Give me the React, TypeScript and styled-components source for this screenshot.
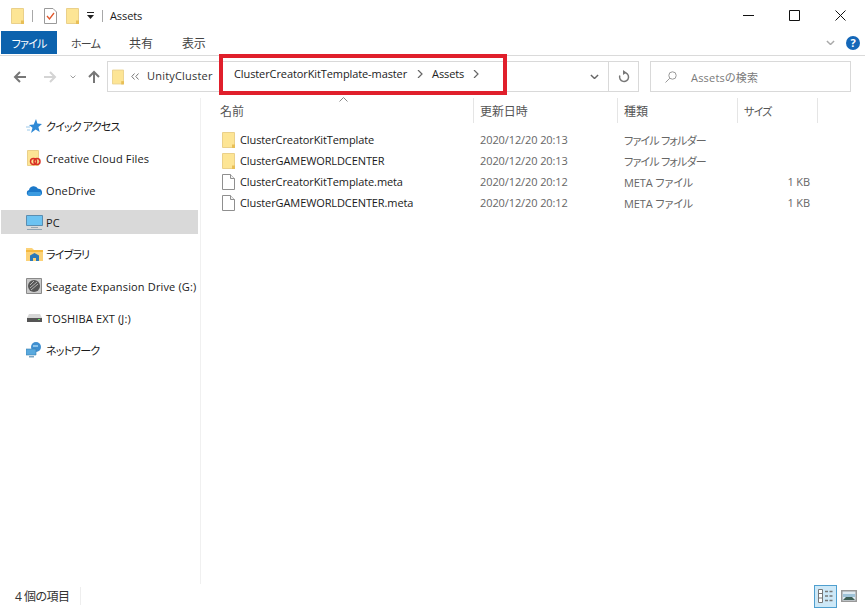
import styled, { createGlobalStyle } from "styled-components";
import { ReactNode } from "react";

const GlobalStyle = createGlobalStyle`
  html, body {
    margin: 0;
    background: #fff;
  }
  * {
    box-sizing: border-box;
  }
`;

const Window = styled.div`
  position: relative;
  width: 865px;
  height: 610px;
  overflow: hidden;
  display: flex;
  flex-direction: column;
  background: #fff;
  color: #1a1a1a;
  font-family: "Open Sans", "Noto Sans CJK JP", sans-serif;
  font-size: 11px;
  letter-spacing: -0.1px;
  font-feature-settings: "palt";
`;

const Kana = styled.span`
  font-size: 11px;
  letter-spacing: -0.8px;
`;

const TitleBar = styled.div`
  height: 31px;
  flex: none;
  display: flex;
  align-items: center;
  padding-left: 11px;
`;

const QuickBar = styled.div`
  display: flex;
  align-items: center;
`;

const TitleSep = styled.span<{ $left: number; $right: number }>`
  width: 1px;
  height: 12px;
  background: #a8a8a8;
  margin: 0 ${(p) => p.$right}px 0 ${(p) => p.$left}px;
`;

const TitleText = styled.span`
  font-size: 11px;
`;

const WindowButtons = styled.div`
  margin-left: auto;
  display: flex;
  align-items: center;
  gap: 35px;
  padding-right: 19px;
`;

const RibbonTabs = styled.div`
  height: 25px;
  flex: none;
  display: flex;
  align-items: stretch;
  border-bottom: 1px solid #dadada;
  padding-left: 1px;
  font-size: 12px;
`;

const FileTab = styled.div`
  width: 56px;
  height: 23px;
  background: #0c62ad;
  color: #fff;
  display: flex;
  align-items: center;
  justify-content: center;
`;

const RibbonTab = styled.div<{ $left: number }>`
  margin-left: ${(p) => p.$left}px;
  height: 23px;
  display: flex;
  align-items: center;
  color: #444;
`;

const RibbonTools = styled.div`
  margin-left: auto;
  height: 23px;
  display: flex;
  align-items: center;
  gap: 11px;
  padding-right: 5px;
`;

const HelpBadge = styled.div`
  width: 14px;
  height: 14px;
  border-radius: 50%;
  background: #1467b8;
  color: #fff;
  font-size: 11px;
  font-weight: 700;
  line-height: 14px;
  text-align: center;
`;

const NavRow = styled.div`
  height: 42px;
  flex: none;
  display: flex;
  align-items: flex-start;
  padding: 5px 14px 0 13px;
`;

const NavButtons = styled.div`
  width: 94px;
  height: 31px;
  flex: none;
  display: flex;
  align-items: center;
`;

const NavSlot = styled.div<{ $left: number }>`
  margin-left: ${(p) => p.$left}px;
  display: flex;
  justify-content: center;
`;

const AddressBar = styled.div`
  width: 532px;
  height: 31px;
  flex: none;
  border: 1px solid #d9d9d9;
  display: flex;
  align-items: center;
  padding-left: 4px;
`;

const OverflowMark = styled.svg`
  margin-left: 7px;
`;

const Crumb = styled.span`
  margin-left: 8px;
  color: #333;
  white-space: nowrap;
  padding-bottom: 2px;
  letter-spacing: 0.2px;
`;

const AddressTail = styled.div`
  margin-left: auto;
  display: flex;
  align-items: stretch;
  height: 100%;
`;

const AddressDrop = styled.div`
  width: 29px;
  display: flex;
  align-items: center;
  justify-content: center;
  padding-left: 2px;
`;

const RefreshButton = styled.div`
  width: 30px;
  border-left: 1px solid #d9d9d9;
  display: flex;
  align-items: center;
  justify-content: center;
`;

const SearchBox = styled.div`
  width: 201px;
  height: 31px;
  flex: none;
  margin-left: 11px;
  border: 1px solid #d9d9d9;
  display: flex;
  align-items: center;
  gap: 14px;
  padding-left: 14px;
  color: #7a7a7a;
  letter-spacing: 0.2px;
`;

const Body = styled.div`
  flex: 1;
  display: flex;
  min-height: 0;
`;

const Sidebar = styled.nav`
  width: 201px;
  flex: none;
  border-right: 1px solid #f0f0f0;
  padding: 16px 0 0 1px;
`;

const SideItem = styled.div<{ $selected?: boolean }>`
  width: 197px;
  height: 24px;
  margin-bottom: 8px;
  display: flex;
  align-items: center;
  padding-left: 24px;
  white-space: nowrap;
  letter-spacing: 0.15px;
  background: ${(p) => (p.$selected ? "#d9d9d9" : "transparent")};
`;

const SideIcon = styled.div`
  width: 18px;
  height: 18px;
  margin-right: 3px;
  flex: none;
  display: flex;
  align-items: center;
  justify-content: center;
`;

const Main = styled.main`
  flex: 1;
  min-width: 0;
`;

const ColumnHeader = styled.div`
  height: 25px;
  display: grid;
  grid-template-columns: 273px 144px 120px 80px;
  color: #555;
  font-size: 12px;
`;

const HeaderCell = styled.div`
  position: relative;
  border-right: 1px solid #e5e5e5;
  padding-left: 6px;
  display: flex;
  align-items: center;
`;

const NameHeader = styled(HeaderCell)`
  padding-left: 19px;
`;

const SortMark = styled.svg`
  position: absolute;
  left: 138px;
  top: -1px;
`;

const FileList = styled.div`
  padding-top: 6px;
`;

const FileRow = styled.div`
  height: 21px;
  display: grid;
  grid-template-columns: 272px 144px 120px 73px;
  align-items: center;
`;

const NameCell = styled.div`
  display: flex;
  align-items: center;
  padding-left: 21px;
  white-space: nowrap;
`;

const FileIconSlot = styled.div`
  width: 13px;
  height: 16px;
  margin-right: 5px;
  display: flex;
  align-items: center;
`;

const MetaCell = styled.div<{ $right?: boolean }>`
  color: #666;
  padding-left: ${(p) => (p.$right ? 0 : 7)}px;
  text-align: ${(p) => (p.$right ? "right" : "left")};
  white-space: nowrap;
`;

const StatusBar = styled.div`
  height: 26px;
  flex: none;
  display: flex;
  align-items: center;
  padding: 0 0 2px 15px;
  color: #333;
  font-size: 12px;
  letter-spacing: -0.5px;
`;

const StatusCount = styled.span`
  padding-right: 10px;
  border-right: 1px solid #eeeeee;
`;

const ViewButtons = styled.div`
  margin-left: auto;
  display: flex;
  align-items: center;
  gap: 4px;
  padding-right: 8px;
`;

const DetailsToggle = styled.div`
  width: 23px;
  height: 23px;
  border: 1px solid #4f9fcf;
  background: #cde8f7;
  display: flex;
  align-items: center;
  justify-content: center;
`;

const Callout = styled.div`
  position: absolute;
  left: 219px;
  top: 54px;
  width: 288px;
  height: 41px;
  border: 4px solid #e01f2b;
  pointer-events: none;
  display: flex;
  align-items: center;
  padding: 0 0 2px 11px;
  color: #222;
  white-space: nowrap;
`;

const CalloutCrumb = styled.span<{ $gap: number }>`
  margin-right: ${(p) => p.$gap}px;
`;

const CrumbArrow = styled.svg<{ $gap: number }>`
  margin-right: ${(p) => p.$gap}px;
`;

const Folder = ({ w = 13, h = 16 }: { w?: number; h?: number }) => (
  <svg width={w} height={h} viewBox="0 0 13 16">
    <path d="M.5.5h12v15H.5z" fill="#fde595" stroke="#ead08a" />
    <path d="M10 12.5h3V16h-3z" fill="#e8bf57" />
  </svg>
);

const Doc = () => (
  <svg width="13" height="16" viewBox="0 0 13 16">
    <path d="M.5.5h8l4 4v11H.5z" fill="#fff" stroke="#8f8f8f" />
    <path d="M8.5.5v4h4" fill="#f0f0f0" stroke="#8f8f8f" />
  </svg>
);

const Chevron = ({ color = "#7a7a7a", size = 9 }: { color?: string; size?: number }) => (
  <svg width={size} height={size * 0.6} viewBox="0 0 10 6">
    <path d="M1 1l4 4 4-4" fill="none" stroke={color} strokeWidth="1.6" />
  </svg>
);

const Arrow = ({ color, dir }: { color: string; dir: "left" | "right" | "up" }) => {
  const rotate = dir === "left" ? 0 : dir === "right" ? 180 : 90;
  return (
    <svg width="14" height="14" viewBox="0 0 14 14" style={{ transform: `rotate(${rotate}deg)` }}>
      <path d="M13 7H2M7 2L2 7l5 5" fill="none" stroke={color} strokeWidth="2" />
    </svg>
  );
};

const sideItems: { label: string; kana?: boolean; icon: ReactNode; selected?: boolean }[] = [
  {
    label: "クイック アクセス",
    kana: true,
    icon: (
      <svg width="16" height="15" viewBox="0 0 16 15">
        <path d="M10 0l1.400 4.600L16 5l-3.600 3 1.300 5-4.100-2.400L5 14l1.500-5.200L3 6l4.700-.4z" fill="#2f8ad6" />
        <path d="M0 8h4M1 11h3" stroke="#9cc9ea" strokeWidth="1" />
      </svg>
    ),
  },
  {
    label: "Creative Cloud Files",
    icon: (
      <svg width="14" height="16" viewBox="0 0 14 16">
        <path d="M.5.5h11v15H.5z" fill="#fde595" stroke="#ead08a" />
        <circle cx="6.500" cy="11.500" r="3" fill="none" stroke="#d93025" strokeWidth="1.500" />
        <circle cx="10" cy="11.500" r="3" fill="none" stroke="#d93025" strokeWidth="1.500" />
      </svg>
    ),
  },
  {
    label: "OneDrive",
    icon: (
      <svg width="17" height="11" viewBox="0 0 17 11">
        <path d="M3.500 11A3 3 0 0 1 3 5.100 4.800 4.800 0 0 1 12 3.800 3.700 3.700 0 0 1 13.500 11z" fill="#1b78c9" />
        <path d="M3.500 11A3 3 0 0 1 2.500 7h12a2.800 2.800 0 0 1-1 4z" fill="#3b9be0" />
      </svg>
    ),
  },
  {
    label: "PC",
    selected: true,
    icon: (
      <svg width="17" height="15" viewBox="0 0 17 15">
        <path d="M.5.500h16v10H.5z" fill="#6cc3f2" stroke="#5a8db0" />
        <path d="M5 12h7v1H5z" fill="#9aa7b0" />
        <path d="M1 14h15v1H1z" fill="#8fa3b2" />
      </svg>
    ),
  },
  {
    label: "ライブラリ",
    kana: true,
    icon: (
      <svg width="17" height="14" viewBox="0 0 17 14">
        <path d="M0 1h6l2 2h9v11H0z" fill="#fcd277" />
        <path d="M0 3h17v2H0z" fill="#f5b93f" />
        <path d="M4 14V8.500L8.500 6 13 8.500V14h-3v-3H7v3z" fill="#2b79b8" />
      </svg>
    ),
  },
  {
    label: "Seagate Expansion Drive (G:)",
    icon: (
      <svg width="16" height="16" viewBox="0 0 16 16">
        <path d="M.5.500h15v15H.5z" fill="#c9c9c9" stroke="#8a8a8a" />
        <circle cx="8" cy="8" r="6" fill="#555" />
        <path d="M4 10l7-6M5 12l7-6M4 7l4-4" stroke="#b5b5b5" strokeWidth="1" />
      </svg>
    ),
  },
  {
    label: "TOSHIBA EXT (J:)",
    icon: (
      <svg width="15" height="8" viewBox="0 0 15 8">
        <path d="M2 0h11l2 4v4H0V4z" fill="#d6d6d6" />
        <path d="M0 4h15v4H0z" fill="#555" />
        <path d="M11 5h2v1h-2z" fill="#5fe05f" />
      </svg>
    ),
  },
  {
    label: "ネットワーク",
    kana: true,
    icon: (
      <svg width="16" height="16" viewBox="0 0 16 16">
        <circle cx="10" cy="5" r="5" fill="#3f8fd0" />
        <path d="M7 3h5v2H7z" fill="#8cc4ea" />
        <path d="M0 7h10v6H0z" fill="#59a9de" stroke="#3b7fb0" strokeWidth=".6" />
        <path d="M3 14h5v1.500H3z" fill="#7aa5c2" />
      </svg>
    ),
  },
];

const files = [
  { name: "ClusterCreatorKitTemplate", date: "2020/12/20 20:13", type: "ファイル フォルダー", size: "", folder: true },
  { name: "ClusterGAMEWORLDCENTER", date: "2020/12/20 20:13", type: "ファイル フォルダー", size: "", folder: true },
  { name: "ClusterCreatorKitTemplate.meta", date: "2020/12/20 20:12", type: "META ファイル", size: "1 KB", folder: false },
  { name: "ClusterGAMEWORLDCENTER.meta", date: "2020/12/20 20:12", type: "META ファイル", size: "1 KB", folder: false },
];

const App = () => {
  return (
    <Window>
      <GlobalStyle />
      <TitleBar>
        <QuickBar>
          <Folder />
          <TitleSep $left={8} $right={11} />
          <svg width="13" height="17" viewBox="0 0 13 17">
            <path d="M.5 1.500h8.500l3.500 3.500v11.500H.5z" fill="#fff" stroke="#9a9a9a" />
            <path d="M3 9l2.500 3L10 6" fill="none" stroke="#e0562a" strokeWidth="1.300" />
          </svg>
          <span style={{ width: 9 }} />
          <Folder />
          <svg width="7" height="8" viewBox="0 0 7 8" style={{ marginLeft: 8 }}>
            <path d="M0 0h7v1H0zM0 3h7L3.500 7z" fill="#222" />
          </svg>
          <TitleSep $left={8} $right={7} />
        </QuickBar>
        <TitleText>Assets</TitleText>
        <WindowButtons>
          <svg width="11" height="11" viewBox="0 0 11 11">
            <path d="M0 5.500h11" stroke="#111" strokeWidth="1" />
          </svg>
          <svg width="11" height="11" viewBox="0 0 11 11">
            <path d="M.5.500h10v10H.5z" fill="none" stroke="#111" strokeWidth="1" />
          </svg>
          <svg width="11" height="11" viewBox="0 0 11 11">
            <path d="M.5.500l10 10M10.500.500l-10 10" stroke="#111" strokeWidth="1" />
          </svg>
        </WindowButtons>
      </TitleBar>

      <RibbonTabs>
        <FileTab>
          <Kana>ファイル</Kana>
        </FileTab>
        <RibbonTab $left={14}>
          <Kana>ホーム</Kana>
        </RibbonTab>
        <RibbonTab $left={29}>共有</RibbonTab>
        <RibbonTab $left={29}>表示</RibbonTab>
        <RibbonTools>
          <Chevron color="#a9a9a9" size={9} />
          <HelpBadge>?</HelpBadge>
        </RibbonTools>
      </RibbonTabs>

      <NavRow>
        <NavButtons>
          <NavSlot $left={0}>
            <Arrow color="#777" dir="left" />
          </NavSlot>
          <NavSlot $left={16}>
            <Arrow color="#d4d4d4" dir="right" />
          </NavSlot>
          <NavSlot $left={13}>
            <Chevron color="#9a9a9a" size={6} />
          </NavSlot>
          <NavSlot $left={11}>
            <Arrow color="#777" dir="up" />
          </NavSlot>
        </NavButtons>
        <AddressBar>
          <Folder w={12} h={16} />
          <OverflowMark width="8" height="7" viewBox="0 0 8 7">
            <path d="M3.500.500L.800 3.500l2.700 3M7.500.500L4.800 3.500l2.700 3" fill="none" stroke="#777" />
          </OverflowMark>
          <Crumb>UnityCluster</Crumb>
          <AddressTail>
            <AddressDrop>
              <Chevron color="#666" size={9} />
            </AddressDrop>
            <RefreshButton>
              <svg width="12" height="13" viewBox="0 0 12 13">
                <path d="M6 2.500a4.500 4.500 0 1 1-4.200 3" fill="none" stroke="#777" strokeWidth="1.500" />
                <path d="M5 0l3.500 2.500L5 5z" fill="#777" />
              </svg>
            </RefreshButton>
          </AddressTail>
        </AddressBar>
        <SearchBox>
          <svg width="12" height="12" viewBox="0 0 12 12">
            <circle cx="7.500" cy="4.500" r="3.700" fill="none" stroke="#999" />
            <path d="M4.800 7.200L.5 11.500" stroke="#999" />
          </svg>
          Assetsの検索
        </SearchBox>
      </NavRow>

      <Body>
        <Sidebar>
          {sideItems.map((item) => (
            <SideItem key={item.label} $selected={item.selected}>
              <SideIcon>{item.icon}</SideIcon>
              {item.kana ? <Kana>{item.label}</Kana> : item.label}
            </SideItem>
          ))}
        </Sidebar>
        <Main>
          <ColumnHeader>
            <NameHeader>
              名前
              <SortMark width="9" height="5" viewBox="0 0 9 5">
                <path d="M.5 4.500l4-4 4 4" fill="none" stroke="#888" />
              </SortMark>
            </NameHeader>
            <HeaderCell>更新日時</HeaderCell>
            <HeaderCell>種類</HeaderCell>
            <HeaderCell>
              <Kana>サイズ</Kana>
            </HeaderCell>
          </ColumnHeader>
          <FileList>
            {files.map((file) => (
              <FileRow key={file.name}>
                <NameCell>
                  <FileIconSlot>{file.folder ? <Folder /> : <Doc />}</FileIconSlot>
                  {file.name}
                </NameCell>
                <MetaCell>{file.date}</MetaCell>
                <MetaCell>{file.folder ? <Kana>{file.type}</Kana> : file.type}</MetaCell>
                <MetaCell $right>{file.size}</MetaCell>
              </FileRow>
            ))}
          </FileList>
        </Main>
      </Body>

      <StatusBar>
        <StatusCount>4 個の項目</StatusCount>
        <ViewButtons>
          <DetailsToggle>
            <svg width="16" height="14" viewBox="0 0 16 14">
              <path d="M.5.500h4v13h-4z" fill="#fff" stroke="#777" />
              <path d="M.5 4.500h4M.5 9h4" stroke="#777" />
              <path d="M7 2.500h8M7 7h8M7 11.500h8" stroke="#777" strokeDasharray="3 1.500" strokeWidth="1.300" />
            </svg>
          </DetailsToggle>
          <svg width="16" height="12" viewBox="0 0 16 12">
            <path d="M.75.750h14.500v10.500H.75z" fill="#dfeaf2" stroke="#999" strokeWidth="1.500" />
            <path d="M2 4h12v3H2z" fill="#9fc3d8" />
            <path d="M2 10l3-3h6l3 3z" fill="#3e5f55" />
          </svg>
        </ViewButtons>
      </StatusBar>

      <Callout>
        <CalloutCrumb $gap={10}>ClusterCreatorKitTemplate-master</CalloutCrumb>
        <CrumbArrow $gap={9} width="6" height="8" viewBox="0 0 6 8">
          <path d="M1 0l4 4-4 4" fill="none" stroke="#666" strokeWidth="1.200" />
        </CrumbArrow>
        <CalloutCrumb $gap={9}>Assets</CalloutCrumb>
        <CrumbArrow $gap={0} width="6" height="8" viewBox="0 0 6 8">
          <path d="M1 0l4 4-4 4" fill="none" stroke="#666" strokeWidth="1.200" />
        </CrumbArrow>
      </Callout>
    </Window>
  );
};

export default App;
